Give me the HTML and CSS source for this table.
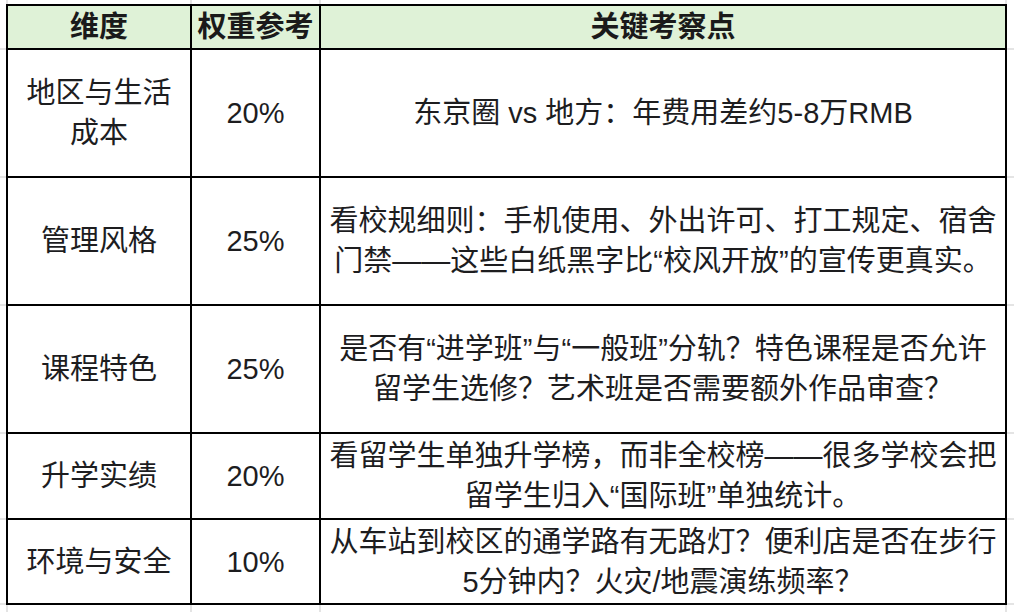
FILE: index.html
```html
<!DOCTYPE html>
<html lang="zh-CN">
<head>
<meta charset="utf-8">
<title>选校维度</title>
<link rel="stylesheet" href="styles.css">
</head>
<body>
<table class="sheet">
  <colgroup>
    <col class="c-dim">
    <col class="c-weight">
    <col class="c-point">
  </colgroup>
  <thead>
    <tr class="row-head">
      <th>维度</th>
      <th>权重参考</th>
      <th>关键考察点</th>
    </tr>
  </thead>
  <tbody>
    <tr class="row-tall">
      <td>地区与生活<br>成本</td>
      <td>20%</td>
      <td>东京圈 vs 地方：年费用差约5-8万RMB</td>
    </tr>
    <tr class="row-tall">
      <td>管理风格</td>
      <td>25%</td>
      <td>看校规细则：手机使用、外出许可、打工规定、宿舍<br>门禁——这些白纸黑字比“校风开放”的宣传更真实。</td>
    </tr>
    <tr class="row-tall">
      <td>课程特色</td>
      <td>25%</td>
      <td>是否有“进学班”与“一般班”分轨？特色课程是否允许<br>留学生选修？艺术班是否需要额外作品审查？</td>
    </tr>
    <tr class="row-mid">
      <td>升学实绩</td>
      <td>20%</td>
      <td>看留学生单独升学榜，而非全校榜——很多学校会把<br>留学生归入“国际班”单独统计。</td>
    </tr>
    <tr class="row-last">
      <td>环境与安全</td>
      <td>10%</td>
      <td>从车站到校区的通学路有无路灯？便利店是否在步行<br>5分钟内？火灾/地震演练频率？</td>
    </tr>
  </tbody>
</table>
</body>
</html>
```

FILE: styles.css
```css
html, body {
  margin: 0;
  padding: 0;
}

body {
  width: 1014px;
  height: 612px;
  overflow: hidden;
  background-color: #ffffff;
  /* faint spreadsheet grid behind the table */
  background-image:
    linear-gradient(#e4e4e4, #e4e4e4),
    linear-gradient(#e4e4e4, #e4e4e4),
    linear-gradient(#e4e4e4, #e4e4e4),
    linear-gradient(#e4e4e4, #e4e4e4),
    linear-gradient(#e4e4e4, #e4e4e4),
    linear-gradient(#e4e4e4, #e4e4e4),
    linear-gradient(#e4e4e4, #e4e4e4),
    linear-gradient(#e4e4e4, #e4e4e4),
    linear-gradient(#e4e4e4, #e4e4e4),
    linear-gradient(#e4e4e4, #e4e4e4);
  background-repeat: no-repeat;
  background-size:
    2px 100%, 2px 100%, 2px 100%, 2px 100%,
    100% 2px, 100% 2px, 100% 2px, 100% 2px, 100% 2px, 100% 2px;
  background-position:
    6px 0, 190px 0, 319px 0, 1005px 0,
    0 48px, 0 176px, 0 304px, 0 432px, 0 518px, 0 603px;
  font-family: "Liberation Sans", "Noto Sans CJK SC", sans-serif;
  color: #1d1d1f;
}

.sheet {
  margin: 4px 0 0 6px;
  width: 1001px;
  table-layout: fixed;
  border-collapse: separate;
  border-spacing: 0;
  border-top: 2px solid #000;
  border-left: 2px solid #000;
  background: #ffffff;
}

.c-dim { width: 184px; }
.c-weight { width: 129px; }
.c-point { width: 686px; }

.sheet th,
.sheet td {
  border-right: 2px solid #000;
  border-bottom: 2px solid #000;
  padding: 0 2px;
  text-align: center;
  vertical-align: middle;
  font-size: 29px;
  line-height: 40px;
  white-space: nowrap;
}

.sheet th {
  background: #dff2d7;
  font-weight: 700;
  color: #1a1a1a;
}

.row-head { height: 44px; }
.row-tall { height: 128px; }
.row-mid { height: 86px; }
.row-last { height: 85px; }
```
